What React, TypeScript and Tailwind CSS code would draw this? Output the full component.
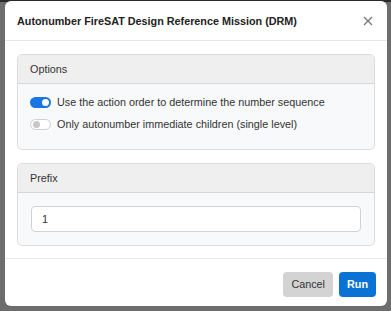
import React from "react";

function Toggle({ on, label }: { on: boolean; label: string }) {
  return (
    <div className="flex items-center gap-[6px] h-[15px]">
      {on ? (
        <div className="w-[21px] h-[11px] rounded-full bg-[#1976e3] flex items-center justify-end pr-[2px]">
          <div className="w-[7px] h-[7px] rounded-full bg-white" />
        </div>
      ) : (
        <div className="w-[21px] h-[11px] rounded-full border border-[#cfcfcf] bg-white flex items-center pl-[2px]">
          <div className="w-[7px] h-[7px] rounded-full bg-[#c8c8c8]" />
        </div>
      )}
      <span className="text-[10.8px] text-[#333]">{label}</span>
    </div>
  );
}

function Card({ title, children }: { title: string; children: React.ReactNode }) {
  return (
    <div className="border border-[#dcdcdc] rounded-[5px] overflow-hidden bg-[#f8f9fa]">
      <div className="h-[29px] bg-[#efefef] border-b border-[#d6d6d6] flex items-center px-[12px] text-[10.8px] text-[#333]">
        {title}
      </div>
      {children}
    </div>
  );
}

export default function App() {
  return (
    <div
      className="w-[391px] h-[311px] bg-[#6d6d6d] relative overflow-hidden"
      style={{ fontFamily: '"Liberation Sans", Arial, sans-serif' }}
    >
      <div className="absolute left-0 top-0 w-[391px] h-[2px] bg-[#2a2a2a]" />
      <div className="absolute left-[5px] top-[1px] w-[382px] h-[305px] bg-white rounded-[6px] flex flex-col">
        <div className="h-[40px] border-b border-[#e6e6e6] flex items-center justify-between pl-[12px] pr-[14px] pt-[1px]">
          <span className="text-[10.8px] font-bold text-[#222]">Autonumber FireSAT Design Reference Mission (DRM)</span>
          <svg width="10" height="10" viewBox="0 0 10 10">
            <path d="M1 1 L9 9 M9 1 L1 9" stroke="#777" strokeWidth="1.3" />
          </svg>
        </div>
        <div className="px-[12px] pt-[13px] pb-[12px] flex flex-col gap-[13px] border-b border-[#e6e6e6]">
          <Card title="Options">
            <div className="px-[12px] pt-[11px] pb-[17px] flex flex-col gap-[7px]">
              <Toggle on label="Use the action order to determine the number sequence" />
              <Toggle on={false} label="Only autonumber immediate children (single level)" />
            </div>
          </Card>
          <Card title="Prefix">
            <div className="px-[13px] pt-[13px] pb-[13px]">
              <div className="h-[26px] bg-white border border-[#d2d2d2] rounded-[4px] flex items-center px-[10px] text-[10.8px] text-[#333]">
                1
              </div>
            </div>
          </Card>
        </div>
        <div className="flex-1 flex items-center justify-end gap-[6px] pr-[11px] pt-[3px]">
          <button className="h-[25px] px-[8px] rounded-[4px] bg-[#d3d3d3] text-[10.8px] text-[#333]">Cancel</button>
          <button className="h-[25px] px-[8px] rounded-[4px] bg-[#0b72d5] text-[10.8px] font-bold text-white">Run</button>
        </div>
      </div>
    </div>
  );
}
